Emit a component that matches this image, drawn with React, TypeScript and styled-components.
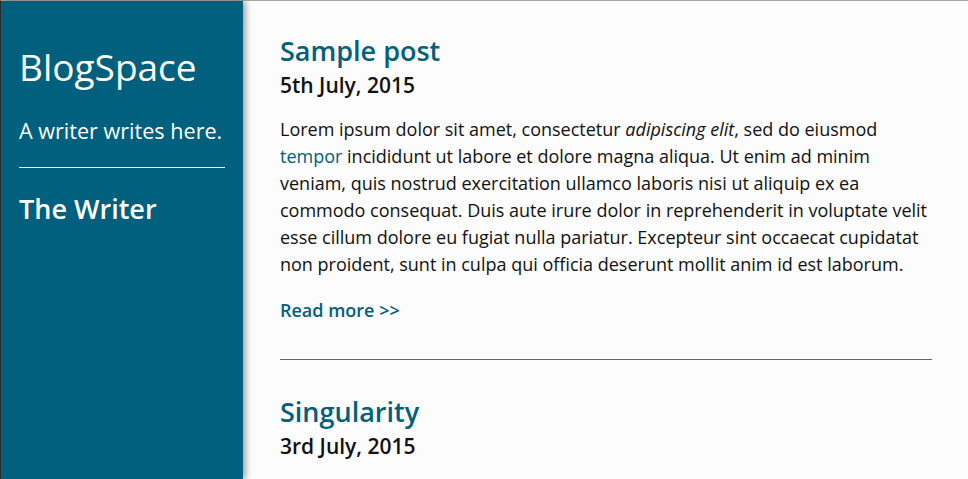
import React from "react";
import styled, { createGlobalStyle } from "styled-components";

const Global = createGlobalStyle`
  html, body { margin: 0; padding: 0; height: 100%; }
  body {
    font-family: "Open Sans", "Noto Sans", sans-serif;
    background: #fcfcfc;
    color: #111;
    overflow: hidden;
  }
  #root { height: 100%; }
`;

const Frame = styled.div`
  display: flex;
  height: 100%;
  box-sizing: border-box;
  border-top: 1px solid #a8a8a8;
  border-left: 1px solid #2a2f33;
`;

const Sidebar = styled.aside`
  width: 242px;
  flex: none;
  background: #00607d;
  color: #fff;
  padding: 26px 18px 0 18px;
  box-sizing: border-box;
  box-shadow: 3px 0 6px rgba(0, 0, 0, 0.35);
  position: relative;
  z-index: 1;
`;

const Brand = styled.h1`
  margin: 15px 0 0;
  font-size: 37px;
  font-weight: 400;
  line-height: 50px;
`;

const Tagline = styled.p`
  margin: 25px 0 0;
  font-size: 21.6px;
  font-weight: 400;
  line-height: 28px;
`;

const Rule = styled.hr`
  border: 0;
  border-top: 1px solid #fff;
  margin: 22px 0 0;
`;

const Author = styled.h2`
  margin: 23px 0 0;
  font-size: 27px;
  font-weight: 600;
  line-height: 36px;
`;

const Main = styled.main`
  flex: 1;
  padding: 30px 36px 0 37px;
`;

const Post = styled.article`
  padding-bottom: 37px;
  border-bottom: 1px solid #666;
  margin-bottom: 32px;
  &:last-child { border-bottom: 0; }
`;

const Title = styled.h2`
  margin: 0;
  font-size: 27px;
  font-weight: 600;
  line-height: 40px;
  color: #00607d;
`;

const PostDate = styled.h3`
  margin: 0;
  font-size: 21px;
  font-weight: 600;
  line-height: 28px;
  color: #111;
`;

const Body = styled.p`
  margin: 17px 0 0;
  font-size: 18px;
  line-height: 27px;
  color: #111;
  em { font-style: italic; }
`;

const Link = styled.a`
  color: #00607d;
  text-decoration: none;
`;

const More = styled.a`
  display: inline-block;
  margin-top: 20px;
  font-size: 18px;
  font-weight: 600;
  color: #00607d;
  text-decoration: none;
`;

export default function App() {
  return (
    <>
      <Global />
      <Frame>
        <Sidebar>
          <Brand>BlogSpace</Brand>
          <Tagline>A writer writes here.</Tagline>
          <Rule />
          <Author>The Writer</Author>
        </Sidebar>
        <Main>
          <Post>
            <Title>Sample post</Title>
            <PostDate>5th July, 2015</PostDate>
            <Body>
              Lorem ipsum dolor sit amet, consectetur <em>adipiscing elit</em>, sed do eiusmod{" "}
              <Link href="#">tempor</Link> incididunt ut labore et dolore magna aliqua. Ut enim ad minim
              veniam, quis nostrud exercitation ullamco laboris nisi ut aliquip ex ea commodo consequat.
              Duis aute irure dolor in reprehenderit in voluptate velit esse cillum dolore eu fugiat nulla
              pariatur. Excepteur sint occaecat cupidatat non proident, sunt in culpa qui officia deserunt
              mollit anim id est laborum.
            </Body>
            <More href="#">Read more &gt;&gt;</More>
          </Post>
          <Post>
            <Title>Singularity</Title>
            <PostDate>3rd July, 2015</PostDate>
          </Post>
        </Main>
      </Frame>
    </>
  );
}
